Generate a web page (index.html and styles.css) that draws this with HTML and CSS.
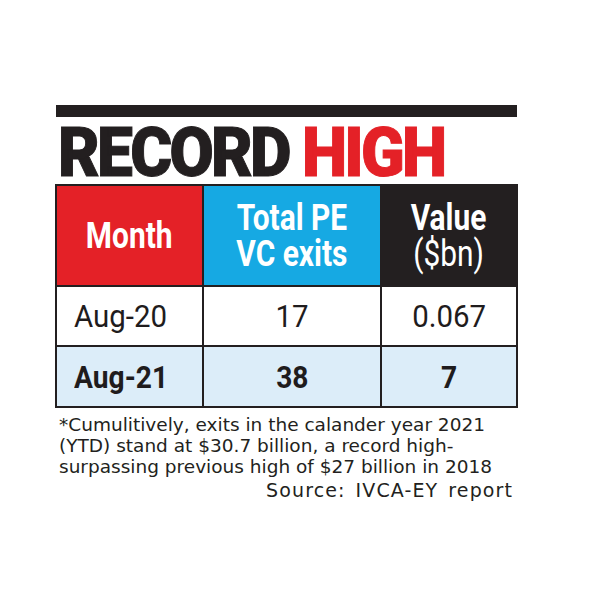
FILE: index.html
```html
<!DOCTYPE html>
<html>
<head>
<meta charset="utf-8">
<link rel="stylesheet" href="styles.css">
</head>
<body>
<div class="wrap">
  <div class="bar"></div>
  <div class="title"><span class="title-inner">RECORD <span class="red">HIGH</span></span></div>
  <div class="grid">
    <div class="hd hd-red"><span class="sx">Month</span></div>
    <div class="hd hd-blue"><span class="sx">Total PE<br>VC exits</span></div>
    <div class="hd hd-black"><span class="sx">Value<br><span class="reg">($bn)</span></span></div>

    <div class="cell first"><span class="sx">Aug-20</span></div>
    <div class="cell"><span class="sx">17</span></div>
    <div class="cell"><span class="sx">0.067</span></div>

    <div class="cell first hl last"><span class="sx b">Aug-21</span></div>
    <div class="cell hl last"><span class="sx b">38</span></div>
    <div class="cell hl last"><span class="sx b">7</span></div>
  </div>
  <p class="note">*Cumulitively, exits in the calander year 2021<br>(YTD) stand at $30.7 billion, a record high-<br>surpassing previous high of $27 billion in 2018</p>
  <p class="source">Source: IVCA-EY report</p>
</div>
</body>
</html>
```
FILE: styles.css
```css
html, body {
  margin: 0;
  padding: 0;
  background: #ffffff;
}
.wrap {
  width: 463px;
  margin-left: 55px;
  padding-top: 105px;
}
.bar {
  height: 12px;
  margin: 0 1px;
  background: #231f20;
}
.title {
  height: 62px;
  line-height: 62px;
  padding-top: 5px;
  padding-left: 3px;
  font-family: Roboto, sans-serif;
  font-weight: 900;
  font-size: 69px;
  color: #231f20;
  white-space: nowrap;
}
.title-inner {
  display: inline-block;
  transform: scaleX(0.93);
  transform-origin: left center;
  letter-spacing: -3px;
  -webkit-text-stroke: 1px currentColor;
}
.red {
  color: #e42127;
}
.grid {
  display: grid;
  grid-template-columns: 145px 178px 136px;
  grid-template-rows: 101px 60px 59px;
  border: 2px solid #231f20;
  font-family: Roboto, sans-serif;
}
.hd {
  display: flex;
  align-items: center;
  justify-content: center;
  text-align: center;
  color: #ffffff;
  font-weight: 700;
  font-size: 36px;
  line-height: 36px;
  border-bottom: 2px solid #231f20;
}
.hd-red { background: #e42127; }
.hd-blue { background: #16a9e3; border-left: 2px solid #231f20; }
.hd-black { background: #231f20; border-left: 2px solid #231f20; }
.reg { font-weight: 400; }
.sx {
  display: inline-block;
  transform: scaleX(0.83);
}
.cell {
  display: flex;
  align-items: center;
  justify-content: center;
  font-size: 32px;
  color: #1f1c1d;
  border-left: 2px solid #231f20;
  border-bottom: 2px solid #231f20;
}
.cell .sx { transform: scaleX(0.92); }
.cell.first {
  border-left: none;
  justify-content: flex-start;
  padding-left: 17px;
}
.cell.first .sx { transform-origin: left center; }
.cell.last { border-bottom: none; }
.cell.hl { background: #dcedf9; }
.cell .b { font-weight: 700; transform: scaleX(0.88); }
.note {
  margin: 6px 0 0 4px;
  font-family: "DejaVu Sans", sans-serif;
  font-size: 18.5px;
  line-height: 21px;
  color: #231f20;
}
.source {
  margin: 3px 5px 0 0;
  text-align: right;
  font-family: "DejaVu Sans", sans-serif;
  font-size: 19px;
  line-height: 21px;
  letter-spacing: 1.1px;
  word-spacing: 3px;
  color: #231f20;
}
```
